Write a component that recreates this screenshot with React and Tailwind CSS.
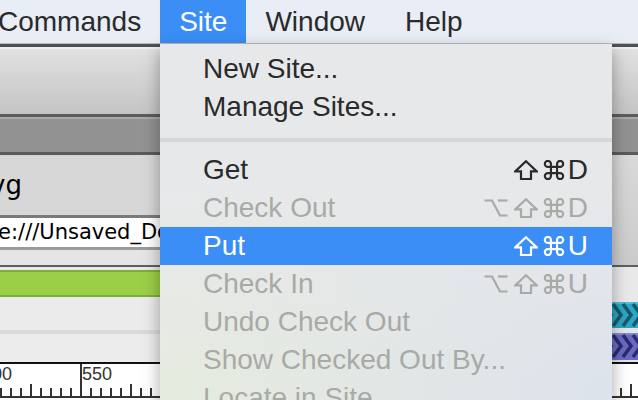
import React from 'react';

const SANS = { fontFamily: '"Liberation Sans", Arial, sans-serif' };
const LUCIDA = { fontFamily: '"DejaVu Sans", "Liberation Sans", sans-serif' };

const ShiftKey = () => (
  <svg width="24" height="20" viewBox="0 0 24 20" fill="none" stroke="currentColor" strokeWidth="2.2" strokeLinejoin="miter">
    <polygon points="12,1.2 22.8,11.4 17,11.4 17,19 7,19 7,11.4 1.2,11.4" />
  </svg>
);

const CmdKey = () => (
  <svg width="22" height="20" viewBox="2.2 2.2 19.6 19.6" fill="none" stroke="currentColor" strokeWidth="2.1">
    <path d="M15 6v12a3 3 0 1 0 3-3H6a3 3 0 1 0 3 3V6a3 3 0 1 0-3 3h12a3 3 0 1 0-3-3" />
  </svg>
);

const OptKey = () => (
  <svg width="24" height="20" viewBox="0 0 24 20" fill="none" stroke="currentColor" strokeWidth="2.2">
    <path d="M0.5 2.5H8L16 17.5H23.5" />
    <path d="M14 2.5H23.5" />
  </svg>
);

const items = [
  { label: 'New Site...' },
  { label: 'Manage Sites...' },
  { sep: true },
  { label: 'Get', mods: ['shift', 'cmd'], key: 'D' },
  { label: 'Check Out', mods: ['opt', 'shift', 'cmd'], key: 'D', disabled: true },
  { label: 'Put', mods: ['shift', 'cmd'], key: 'U', active: true },
  { label: 'Check In', mods: ['opt', 'shift', 'cmd'], key: 'U', disabled: true },
  { label: 'Undo Check Out', disabled: true },
  { label: 'Show Checked Out By...', disabled: true },
  { label: 'Locate in Site', disabled: true },
];

const Shortcut = ({ mods, k }) => (
  <div className="flex items-center">
    {mods.includes('opt') && (
      <span className="mr-[6px] flex"><OptKey /></span>
    )}
    <span className="mr-[5px] flex"><ShiftKey /></span>
    <span className="flex"><CmdKey /></span>
    <span className="ml-[3px] text-[28px] leading-[38px]">{k}</span>
  </div>
);

const SiteMenu = () => (
  <div
    className="absolute left-[160px] top-[44px] w-[452px] h-[420px] pt-[6px] shadow-[0_6px_16px_rgba(0,0,0,0.35)] bg-[linear-gradient(to_bottom,#e7e8ea_0%,#e7e8ea_35%,rgba(231,232,234,0)_80%),linear-gradient(to_right,#e6ebdf,#dde3ec)]"
    style={SANS}
  >
    {items.map((it, i) =>
      it.sep ? (
        <div key={i} className="h-[25px] pt-[12px]">
          <div className="h-[4px] bg-[#d5d6d8]" />
        </div>
      ) : (
        <div
          key={i}
          className={
            'flex h-[38px] items-center justify-between pl-[43px] pr-[24px] text-[28px] leading-[38px] ' +
            (it.active ? 'bg-[#3a8ef6] text-white' : it.disabled ? 'text-[#a8aaa6]' : 'text-[#2a2a2a]')
          }
        >
          <span>{it.label}</span>
          {it.mods && <Shortcut mods={it.mods} k={it.key} />}
        </div>
      )
    )}
  </div>
);

const MenuBar = () => (
  <div className="flex h-[44px] border-b border-[#b8babe] bg-[#e9edf5] text-[28px] leading-[43px] text-[#2a2a2a]" style={SANS}>
    <div className="ml-[-21px] px-[19px]">Commands</div>
    <div className="bg-[#3a8ef6] px-[19px] text-white">Site</div>
    <div className="px-[19px]">Window</div>
    <div className="px-[19px] ml-[2px]">Help</div>
  </div>
);

const Chevrons = ({ base, dark, edge }) => (
  <svg width="26" height="26" viewBox="0 0 26 26" className="block">
    <rect width="26" height="26" fill={base} />
    <rect width="26" height="2" fill={edge} />
    {[-10, 0, 10, 20].map((x) => (
      <polyline key={x} points={`${x + 1},2 ${x + 9},13 ${x + 1},24`} fill="none" stroke={dark} strokeWidth="3.5" />
    ))}
  </svg>
);

const Ruler = () => {
  const ticks = [];
  for (let k = 0; k < 64; k++) {
    const x = k * 10;
    const major = (x - 80) % 100 === 0;
    const mid = (x - 30) % 100 === 0;
    const top = major ? 0 : mid ? 20 : 24;
    ticks.push(<rect key={k} x={x} y={top} width="2" height={34 - top} fill="#333" />);
  }
  return (
    <svg width="638" height="36" className="block bg-white">
      {ticks}
      <rect x="0" y="32" width="638" height="2" fill="#333" />
      <text x="-18" y="16" fontSize="18" fill="#333" fontFamily="Liberation Sans, Arial, sans-serif">500</text>
      <text x="82" y="16" fontSize="18" fill="#333" fontFamily="Liberation Sans, Arial, sans-serif">550</text>
    </svg>
  );
};

const Window = () => (
  <div className="flex flex-col">
    <div className="h-[3px] bg-[#4d5157]" />
    <div className="h-[2px] bg-[#efefef]" />
    <div className="h-[65px] bg-gradient-to-b from-[#e1e1e1] to-[#c4c4c4]" />
    <div className="h-[3px] bg-[#5c5c5c]" />
    <div className="h-[2px] bg-[#a8a8a8]" />
    <div className="h-[33px] bg-[#929292]" />
    <div className="h-[3px] bg-[#5b5b5b]" />
    <div className="flex h-[207px]">
      <div className="flex flex-1 flex-col">
        <div className="h-[60px] bg-[#d7d7d7] overflow-hidden">
          <div className="ml-[-10px] text-[26px] leading-[60px] text-black" style={LUCIDA}>vg</div>
        </div>
        <div className="h-[3px] bg-[#7a7a7a]" />
        <div className="h-[29px] bg-white overflow-hidden">
          <div className="ml-[-21px] whitespace-nowrap text-[21px] leading-[29px] text-black" style={LUCIDA}>
            file:///Unsaved_Document1
          </div>
        </div>
        <div className="h-[3px] bg-[#9a9a9a]" />
        <div className="h-[15px] bg-[#e5e5e5]" />
        <div className="h-[2px] bg-[#5f5f5f]" />
        <div className="h-[3px] bg-[#e9e9e9]" />
        <div className="h-[27px] border-y-2 border-[#7fad38] bg-[#9bcf47]" />
        <div className="h-[33px] bg-[#ebebeb]" />
        <div className="h-[4px] bg-[#dadada]" />
        <div className="h-[28px] bg-[#ececec]" />
      </div>
      <div className="flex w-[26px] flex-col">
        <div className="h-[110px] bg-gradient-to-b from-[#d9d9d9] to-[#cbcbcb]" />
        <div className="h-[2px] bg-[#5f5f5f]" />
        <div className="h-[35px] bg-[#e9e9e9]" />
        <Chevrons base="#2ba6c3" dark="#17566b" edge="#4fbcd6" />
        <div className="h-[5px] bg-[#e6e6e6]" />
        <div className="h-[27px] bg-[#6a6ac4]">
          <Chevrons base="#6a6ac4" dark="#2b2b6a" edge="#8686d2" />
        </div>
        <div className="h-[2px] bg-[#e6e6e6]" />
      </div>
    </div>
    <div className="h-[2px] bg-[#111]" />
    <Ruler />
  </div>
);

export default function App() {
  return (
    <div className="relative h-[400px] w-[638px] overflow-hidden bg-white">
      <MenuBar />
      <Window />
      <SiteMenu />
    </div>
  );
}
